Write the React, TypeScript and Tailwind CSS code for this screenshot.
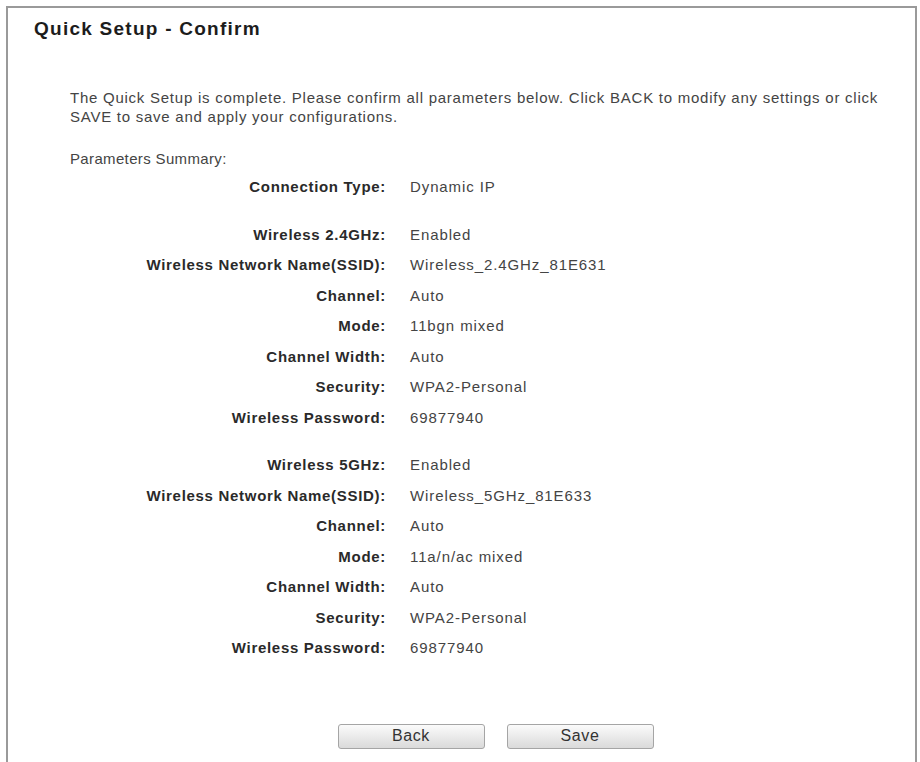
import React from 'react';

const groups = [
  [['Connection Type:', 'Dynamic IP']],
  [
    ['Wireless 2.4GHz:', 'Enabled'],
    ['Wireless Network Name(SSID):', 'Wireless_2.4GHz_81E631'],
    ['Channel:', 'Auto'],
    ['Mode:', '11bgn mixed'],
    ['Channel Width:', 'Auto'],
    ['Security:', 'WPA2-Personal'],
    ['Wireless Password:', '69877940'],
  ],
  [
    ['Wireless 5GHz:', 'Enabled'],
    ['Wireless Network Name(SSID):', 'Wireless_5GHz_81E633'],
    ['Channel:', 'Auto'],
    ['Mode:', '11a/n/ac mixed'],
    ['Channel Width:', 'Auto'],
    ['Security:', 'WPA2-Personal'],
    ['Wireless Password:', '69877940'],
  ],
];

const App = () => {
  return (
    <div className="h-[762px] w-[920px] overflow-hidden bg-white pl-[6px] pr-[3px] pt-[6px] font-['Liberation_Sans',Arial,sans-serif] text-[#444]">
      <div className="h-[780px] border-l-2 border-r-2 border-t-2 border-[#9a9a9a] bg-white">
        <h1 className="pl-[26px] pt-[8px] text-[19px] font-bold leading-[26px] tracking-[1.25px] text-[#1c1c1c]">Quick Setup - Confirm</h1>

        <div className="pl-[62px] pr-[20px] pt-[46px] text-[15px]">
          <p className="leading-[19px] tracking-[0.75px]">
            The Quick Setup is complete. Please confirm all parameters below. Click BACK to modify any settings or click SAVE to save and apply your configurations.
          </p>
          <p className="mt-[23px] leading-[19px] tracking-[0.35px]">Parameters Summary:</p>

          <div className="mt-[4px] flex flex-col gap-[17px]">
            {groups.map((rows, gi) => (
              <div key={gi} className="flex flex-col">
                {rows.map(([label, value], ri) => (
                  <div key={ri} className="flex h-[30.5px] items-center">
                    <div className="w-[316px] text-right font-bold tracking-[0.7px] text-[#2a2a2a]">{label}</div>
                    <div className="pl-[24px] tracking-[0.9px]">{value}</div>
                  </div>
                ))}
              </div>
            ))}
          </div>

          <div className="mt-[60px] flex justify-center gap-[22px] pl-[26px]">
            <button className="h-[25px] w-[147px] rounded-[3px] border border-[#a5a5a5] bg-gradient-to-b from-[#fbfbfb] to-[#dadada] text-[16px] leading-none tracking-[0.6px] text-[#333]">
              Back
            </button>
            <button className="h-[25px] w-[147px] rounded-[3px] border border-[#a5a5a5] bg-gradient-to-b from-[#fbfbfb] to-[#dadada] text-[16px] leading-none tracking-[0.6px] text-[#333]">
              Save
            </button>
          </div>
        </div>
      </div>
    </div>
  );
};

export default App;
